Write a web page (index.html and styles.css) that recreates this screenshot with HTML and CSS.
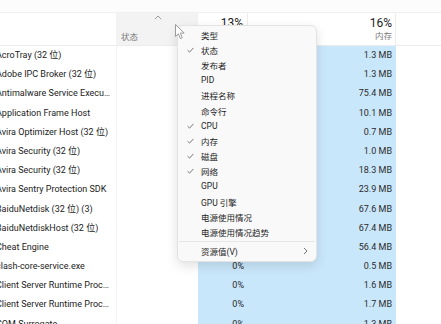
FILE: index.html
```html
<!DOCTYPE html>
<html lang="zh-CN">
<head>
    <meta charset="UTF-8">
    <title>任务管理器 - 进程</title>
    <link rel="stylesheet" href="styles.css">
</head>
<body>
    <div class="app">
        <div class="topbar"></div>

        <div class="grid header">
            <div class="col-name"></div>
            <div class="col-status sorted">
                <span class="caret">
                    <svg width="8" height="5" viewBox="0 0 8 5"><path d="M0.8 4.2 L4 1 L7.2 4.2" fill="none" stroke="#9a9a9a" stroke-width="1"/></svg>
                </span>
                <span class="label">状态</span>
            </div>
            <div class="col-cpu">
                <span class="pct">13%</span>
                <span class="label"></span>
            </div>
            <div class="col-mem">
                <span class="pct">16%</span>
                <span class="label">内存</span>
            </div>
            <div class="col-rest"></div>
        </div>

        <div class="rows" id="rows"></div>

        <!-- column context menu -->
        <div class="menu" id="menu"></div>

        <svg class="cursor" width="11" height="16" viewBox="0 0 11 16">
            <path d="M0.5 0.5 L0.5 12.5 L3.4 9.8 L5.4 14.5 L7.3 13.7 L5.3 9.1 L9.2 9.1 Z" fill="#fff" stroke="#9a9a9a" stroke-width="1" stroke-linejoin="round"/>
        </svg>
    </div>

    <script>
        // process list
        const processes = [
            ['AcroTray (32 位)', '0%', '1.3 MB'],
            ['Adobe IPC Broker (32 位)', '0%', '1.3 MB'],
            ['Antimalware Service Executable', '0%', '75.4 MB'],
            ['Application Frame Host', '0%', '10.1 MB'],
            ['Avira Optimizer Host (32 位)', '0%', '0.7 MB'],
            ['Avira Security (32 位)', '0%', '1.0 MB'],
            ['Avira Security (32 位)', '0%', '18.3 MB'],
            ['Avira Sentry Protection SDK', '0%', '23.9 MB'],
            ['BaiduNetdisk (32 位) (3)', '0%', '67.6 MB'],
            ['BaiduNetdiskHost (32 位)', '0%', '67.4 MB'],
            ['Cheat Engine', '0%', '56.4 MB'],
            ['clash-core-service.exe', '0%', '0.5 MB'],
            ['Client Server Runtime Process', '0%', '1.6 MB'],
            ['Client Server Runtime Process', '0%', '1.7 MB'],
            ['COM Surrogate', '0%', '1.3 MB']
        ];

        const rows = document.getElementById('rows');
        processes.forEach(p => {
            const row = document.createElement('div');
            row.className = 'grid row';
            row.innerHTML =
                `<div class="col-name"><span class="name">${p[0]}</span></div>` +
                `<div class="col-status"></div>` +
                `<div class="col-cpu heat">${p[1]}</div>` +
                `<div class="col-mem heat">${p[2]}</div>` +
                `<div class="col-rest"></div>`;
            rows.appendChild(row);
        });

        // columns that can be shown, [label, checked]
        const columns = [
            ['类型', false], ['状态', true], ['发布者', false], ['PID', false],
            ['进程名称', false], ['命令行', false], ['CPU', true], ['内存', true],
            ['磁盘', true], ['网络', true], ['GPU', false], ['GPU 引擎', false],
            ['电源使用情况', false], ['电源使用情况趋势', false]
        ];
        const tick = '<svg width="7" height="6" viewBox="0 0 7 6"><path d="M0.6 3.2 L2.6 5.1 L6.4 0.9" fill="none" stroke="#6a6a6a" stroke-width="0.9"/></svg>';
        const arrow = '<svg width="5" height="8" viewBox="0 0 5 8"><path d="M1 1 L4 4 L1 7" fill="none" stroke="#666" stroke-width="0.9"/></svg>';

        const menu = document.getElementById('menu');
        let html = '';
        columns.forEach(c => {
            html += `<div class="menu-item"><span class="check">${c[1] ? tick : ''}</span>${c[0]}</div>`;
        });
        html += '<div class="menu-sep"></div>';
        html += `<div class="menu-item sub"><span class="check"></span>资源值(V)<span class="arrow">${arrow}</span></div>`;
        menu.innerHTML = html;
    </script>
</body>
</html>
```

FILE: styles.css
```css
body {
    margin: 0;
    padding: 0;
    background-color: #ffffff;
    font-family: Roboto, 'Noto Sans CJK SC', sans-serif;
    color: #1b1b1b;
    overflow: hidden;
}
.app {
    position: relative;
    width: 441px;
    height: 324px;
    overflow: hidden;
}
.topbar {
    height: 12px;
    background-color: #fcfcfc;
    border-bottom: 1px solid #f0f0f0;
}
.grid {
    display: grid;
    grid-template-columns: 116px 82px 50px 148px 1fr;
}
.header {
    height: 32px;
    border-bottom: 1px solid #ececec;
}
.header > div {
    display: flex;
    flex-direction: column;
    align-items: flex-end;
    padding: 3px 4px 0 0;
    box-sizing: border-box;
}
.header .col-cpu,
.header .col-mem {
    border-right: 1px solid #ececec;
}
.header .col-mem {
    padding-right: 3px;
}
.header .col-status {
    background-color: #f3f3f3;
    align-items: flex-start;
    justify-content: space-between;
    padding: 2px 4px 2px 5px;
}
.header .caret {
    align-self: center;
    display: flex;
}
.header .label {
    font-size: 8.5px;
    color: #7a7a7a;
    height: 12px;
    line-height: 12px;
}
.header .pct {
    font-size: 12px;
    color: #222;
    line-height: 14px;
    height: 14px;
}
.rows {
    font-size: 9px;
}
.row {
    height: 19.2px;
    line-height: 19.2px;
}
.row .col-name {
    border-right: 1px solid #f4f4f4;
    overflow: hidden;
    white-space: nowrap;
    text-overflow: ellipsis;
    margin-left: -4px;
    padding-right: 5px;
    width: 115px;
}
.heat {
    background-color: #c9e7fb;
    text-align: right;
    padding-right: 4px;
    color: #2a2a2a;
}

/* context menu */
.menu {
    position: absolute;
    left: 177px;
    top: 25px;
    width: 140px;
    padding: 1px 0;
    background-color: #f9f9f9;
    border: 1px solid #e3e3e3;
    border-radius: 6px;
    box-shadow: 0 4px 12px rgba(0, 0, 0, 0.12);
    font-size: 8.5px;
    color: #1e1e1e;
    box-sizing: border-box;
}
.menu-item {
    height: 15.2px;
    display: flex;
    align-items: center;
    white-space: nowrap;
}
.check {
    width: 23px;
    padding-left: 9px;
    box-sizing: border-box;
    display: flex;
    align-items: center;
    flex-shrink: 0;
}
.menu-sep {
    height: 1px;
    background-color: #e6e6e6;
    margin: 1px 1px;
}
.menu-item.sub {
    height: 17px;
}
.arrow {
    margin-left: auto;
    margin-right: 8px;
    display: flex;
}
.cursor {
    position: absolute;
    left: 175px;
    top: 24px;
}
```
